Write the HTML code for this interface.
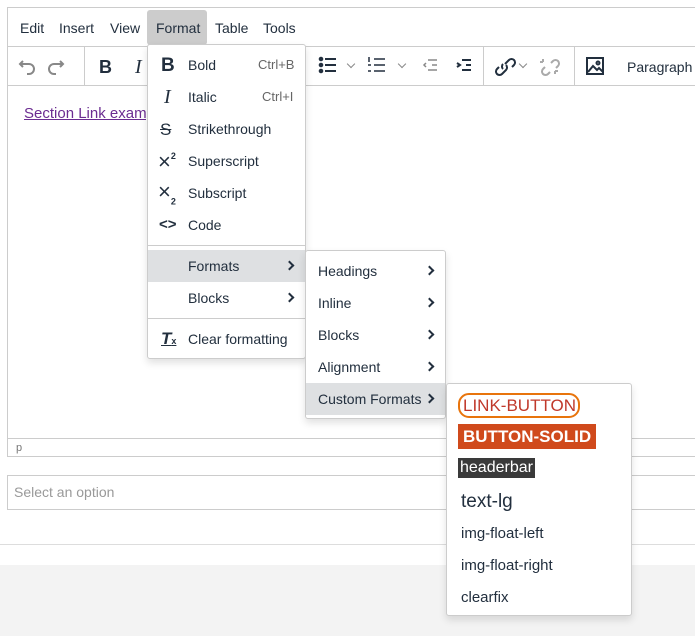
<!DOCTYPE html>
<html><head><style>
*{box-sizing:border-box;margin:0;padding:0}
body{width:695px;height:636px;position:relative;background:#fff;font-family:"Liberation Sans",sans-serif;color:#222f3e;overflow:hidden;font-size:14px}
.a{position:absolute}
.t{position:absolute;white-space:nowrap;line-height:1}
.menu{position:absolute;background:#fff;border:1px solid #ccc;border-radius:3px;box-shadow:0 4px 8px rgba(0,0,0,.12)}
.hl{position:absolute;background:#dee0e2}
.chev{position:absolute;width:7px;height:7px;border-right:2px solid #222f3e;border-top:2px solid #222f3e;transform:rotate(45deg)}
.dd{position:absolute;width:6px;height:6px;border-right:1.5px solid #888;border-bottom:1.5px solid #888;transform:rotate(45deg)}
</style></head><body>
<div class="a" style="left:7px;top:7px;width:700px;height:450px;border:1px solid #ccc"></div>
<div class="a" style="left:8px;top:46px;width:690px;height:1px;background:#ccc"></div>
<div class="a" style="left:8px;top:85px;width:690px;height:1px;background:#ccc"></div>
<div class="a" style="left:84px;top:47px;width:1px;height:38px;background:#ccc"></div>
<div class="a" style="left:483px;top:47px;width:1px;height:38px;background:#ccc"></div>
<div class="a" style="left:574px;top:47px;width:1px;height:38px;background:#ccc"></div>
<div class="a" style="left:8px;top:438px;width:690px;height:1px;background:#ccc"></div>
<div class="t" style="left:16px;top:443px;font-size:11px;color:#777">p</div>
<div class="t" style="left:20px;top:21px">Edit</div>
<div class="t" style="left:59px;top:21px">Insert</div>
<div class="t" style="left:110px;top:21px">View</div>
<div class="a" style="left:147px;top:10px;width:60px;height:35px;background:#ccc;border-radius:3px"></div>
<div class="t" style="left:156px;top:21px">Format</div>
<div class="t" style="left:215px;top:21px">Table</div>
<div class="t" style="left:263px;top:21px">Tools</div>
<svg class="a" style="left:18px;top:55px" width="68" height="22" fill="none" stroke="#888" stroke-width="2"><path d="M5 6 L2 9 L5 12 M2 9 H11 a5 5 0 0 1 0 10 H9"/><path d="M42 6 L45 9 L42 12 M45 9 H36 a5 5 0 0 0 0 10 H38"/></svg>
<div class="t" style="left:99px;top:58px;font-weight:bold;font-size:18px">B</div>
<div class="t" style="left:135px;top:57px;font-style:italic;font-family:'Liberation Serif',serif;font-size:20px">I</div>
<svg class="a" style="left:318px;top:55px" width="160" height="22" fill="none" stroke="#222f3e" stroke-width="2"><circle cx="3" cy="4" r="1.3" fill="#222f3e"/><circle cx="3" cy="10" r="1.3" fill="#222f3e"/><circle cx="3" cy="16" r="1.3" fill="#222f3e"/><path d="M7 4h11M7 10h11M7 16h11"/><path d="M56 4h11M56 10h11M56 16h11M51 2v5M50 10h3M50 16h3" stroke-width="1.5"/><path d="M110 5h9M114 10h5M110 15h9M108 8l-2 2 2 2" stroke="#888" stroke-width="1.5"/><path d="M144 5h9M148 10h5M144 15h9M139 8l3 2-3 2"/></svg>
<div class="dd" style="left:348px;top:61px"></div>
<div class="dd" style="left:399px;top:61px"></div>
<svg class="a" style="left:493px;top:55px" width="70" height="22" fill="none" stroke="#222f3e" stroke-width="2"><path d="M6 12 l-2 2 a3.5 3.5 0 0 0 5 5 l4-4 a3.5 3.5 0 0 0 0-5 M12 9 l4-4 a3.5 3.5 0 0 1 5 5 l-2 2 M10 14 a3.5 3.5 0 0 1 0-5"/><path d="M52 12 l-2 2 a3.5 3.5 0 0 0 5 5 l2-2 M58 8 l2-2 a3.5 3.5 0 0 1 5 5 l-2 2 M50 4v3M47 7h3M62 19v-3M65 16h-3" stroke="#aaa"/></svg>
<div class="dd" style="left:520px;top:61px"></div>
<svg class="a" style="left:585px;top:56px" width="20" height="20" fill="none" stroke="#222f3e" stroke-width="2"><rect x="2" y="2" width="16" height="16"/><path d="M3 16 l5-6 4 4 2-2 4 4"/><circle cx="13" cy="7" r="1.5"/></svg>
<div class="t" style="left:627px;top:60px">Paragraph</div>
<div class="t" style="left:24px;top:106px;font-size:15px;color:#6b2c91;text-decoration:underline">Section Link example</div>
<div class="a" style="left:7px;top:475px;width:700px;height:35px;border:1px solid #ccc"></div>
<div class="t" style="left:14px;top:485px;color:#999">Select an option</div>
<div class="a" style="left:0;top:544px;width:695px;height:1px;background:#ddd"></div>
<div class="a" style="left:0;top:565px;width:695px;height:71px;background:#f3f3f3"></div>
<div class="menu" style="left:147px;top:44px;width:159px;height:315px">
<div class="hl" style="left:0;top:205px;width:157px;height:32px"></div>
<div class="a" style="left:0;top:200px;width:157px;height:1px;background:#ccc"></div>
<div class="a" style="left:0;top:273px;width:157px;height:1px;background:#ccc"></div>
</div>
<div class="t" style="left:161px;top:56px;font-weight:bold;font-size:19px">B</div>
<div class="t" style="left:164px;top:87px;font-style:italic;font-family:'Liberation Serif',serif;font-size:20px">I</div>
<div class="t" style="left:160px;top:121px;font-size:17px;text-decoration:line-through">S</div>
<div class="t" style="left:158px;top:151px;font-size:22px">×<sup style="font-size:9px;font-weight:bold;vertical-align:10px">2</sup></div>
<div class="t" style="left:158px;top:181px;font-size:22px">×<sub style="font-size:9px;font-weight:bold">2</sub></div>
<div class="t" style="left:159px;top:217px;font-size:15px;font-weight:bold">&lt;&gt;</div>
<div class="t" style="left:161px;top:330px;font-size:17px;font-style:italic;font-weight:bold;text-decoration:underline">T<span style="font-size:9px;font-style:normal">x</span></div>
<div class="t" style="left:188px;top:58px">Bold</div><div class="t" style="left:258px;top:58px;color:#666;font-size:13px">Ctrl+B</div>
<div class="t" style="left:188px;top:90px">Italic</div><div class="t" style="left:262px;top:90px;color:#666;font-size:13px">Ctrl+I</div>
<div class="t" style="left:188px;top:122px">Strikethrough</div>
<div class="t" style="left:188px;top:154px">Superscript</div>
<div class="t" style="left:188px;top:186px">Subscript</div>
<div class="t" style="left:188px;top:218px">Code</div>
<div class="t" style="left:188px;top:259px">Formats</div><div class="chev" style="left:286px;top:262px"></div>
<div class="t" style="left:188px;top:291px">Blocks</div><div class="chev" style="left:286px;top:294px"></div>
<div class="t" style="left:188px;top:332px">Clear formatting</div>
<div class="menu" style="left:305px;top:250px;width:141px;height:169px">
<div class="hl" style="left:0;top:132px;width:139px;height:32px"></div>
</div>
<div class="t" style="left:318px;top:264px">Headings</div><div class="chev" style="left:426px;top:267px"></div>
<div class="t" style="left:318px;top:296px">Inline</div><div class="chev" style="left:426px;top:299px"></div>
<div class="t" style="left:318px;top:328px">Blocks</div><div class="chev" style="left:426px;top:331px"></div>
<div class="t" style="left:318px;top:360px">Alignment</div><div class="chev" style="left:426px;top:363px"></div>
<div class="t" style="left:318px;top:392px">Custom Formats</div><div class="chev" style="left:426px;top:395px"></div>
<div class="menu" style="left:446px;top:383px;width:186px;height:233px"></div>
<div class="t" style="left:458px;top:393px;font-size:17px;color:#c0392b;border:2px solid #e8740c;border-radius:11px;padding:2px 2px 2px 3px">LINK-BUTTON</div>
<div class="t" style="left:458px;top:424px;font-size:17px;font-weight:bold;color:#fff;background:#d04a1c;padding:4px 5px">BUTTON-SOLID</div>
<div class="t" style="left:458px;top:458px;font-size:16px;color:#fff;background:#3a3a3a;padding:2px 2px">headerbar</div>
<div class="t" style="left:461px;top:492px;font-size:19px">text-lg</div>
<div class="t" style="left:461px;top:526px;font-size:15px">img-float-left</div>
<div class="t" style="left:461px;top:558px;font-size:15px">img-float-right</div>
<div class="t" style="left:461px;top:590px;font-size:15px">clearfix</div>
</body></html>
